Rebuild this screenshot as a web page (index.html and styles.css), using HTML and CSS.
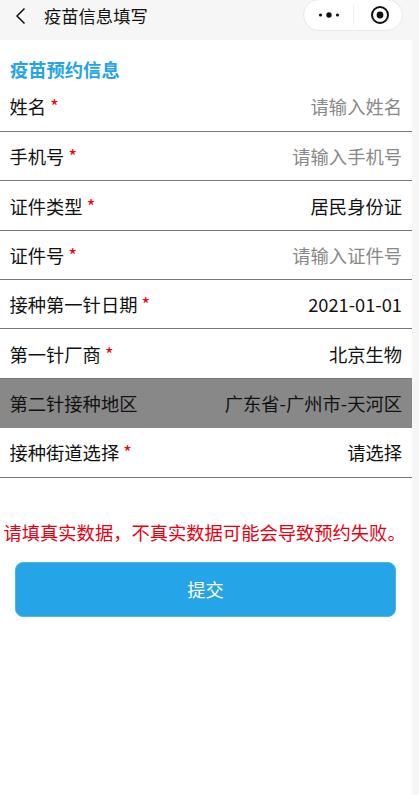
FILE: index.html
```html
<!DOCTYPE html>
<html>
<head>
<meta name="viewport" content="width=device-width, initial-scale=1">
<link rel="stylesheet" href="styles.css">
</head>
<body>
<div class="page">
  <div class="navbar">
    <svg class="back" width="12" height="18" viewBox="0 0 12 18"><path d="M10.500 1.500 L3 9 L10.500 16.500" fill="none" stroke="#111" stroke-width="1.500"/></svg>
    <span class="nav-title">疫苗信息填写</span>
    <div class="capsule">
      <svg class="dots" width="22" height="8" viewBox="0 0 22 8"><circle cx="2.500" cy="4" r="1.600" fill="#111"/><circle cx="11" cy="4" r="2.700" fill="#111"/><circle cx="19.500" cy="4" r="1.600" fill="#111"/></svg>
      <span class="capsule-line"></span>
      <svg class="target" width="20" height="20" viewBox="0 0 20 20"><circle cx="10" cy="10" r="8" fill="none" stroke="#111" stroke-width="2"/><circle cx="10" cy="10" r="3.400" fill="#111"/></svg>
    </div>
  </div>
  <div class="section-title">疫苗预约信息</div>
  <div class="form">
    <div class="row first"><span>姓名 <i>*</i></span><span class="hint">请输入姓名</span></div>
    <div class="row"><span>手机号 <i>*</i></span><span class="hint">请输入手机号</span></div>
    <div class="row"><span>证件类型 <i>*</i></span><span>居民身份证</span></div>
    <div class="row"><span>证件号 <i>*</i></span><span class="hint">请输入证件号</span></div>
    <div class="row"><span>接种第一针日期 <i>*</i></span><span>2021-01-01</span></div>
    <div class="row"><span>第一针厂商 <i>*</i></span><span>北京生物</span></div>
    <div class="row grey"><span>第二针接种地区</span><span>广东省-广州市-天河区</span></div>
    <div class="row"><span>接种街道选择 <i>*</i></span><span>请选择</span></div>
  </div>
  <p class="warn">请填真实数据，不真实数据可能会导致预约失败。</p>
  <button class="submit">提交</button>
</div>
</body>
</html>
```
FILE: styles.css
```css
* {
  box-sizing: border-box;
}
body {
  margin: 0;
  height: 795px;
  overflow: hidden;
  background-color: #f6f6f6;
  font-family: "Noto Sans CJK SC", "Liberation Sans", sans-serif;
  color: #111;
}
.page {
  width: 412px;
  height: 795px;
  background-color: #fff;
}
/* top bar */
.navbar {
  width: 419px;
  height: 40px;
  background-color: #f6f6f6;
  display: flex;
  align-items: flex-start;
  padding: 0 16px 0 14px;
}
.back {
  margin-top: 7px;
}
.nav-title {
  margin-left: 18px;
  font-size: 17.300px;
  line-height: 32px;
  flex: 1;
}
.capsule {
  width: 100px;
  height: 32px;
  margin-top: -1px;
  border: 1px solid #e8e8e8;
  border-radius: 16px;
  background-color: #fff;
  display: flex;
  align-items: center;
  padding-left: 14px;
}
.capsule-line {
  width: 1px;
  height: 20px;
  margin-left: 13px;
  background-color: #eee;
}
.target {
  margin-left: 16px;
}
.section-title {
  padding-left: 10px;
  margin-top: 15px;
  height: 29px;
  font-size: 18.300px;
  line-height: 28px;
  font-weight: bold;
  color: #25a4e8;
}
/* form rows */
.row {
  height: 49.360px;
  display: flex;
  align-items: center;
  justify-content: space-between;
  padding: 0 10px 0 9.500px;
  border-bottom: 1px solid #777;
  font-size: 18.300px;
}
.row.first {
  height: 48px;
  padding-bottom: 3px;
}
.row i {
  font-style: normal;
  color: #e00;
}
.hint {
  color: #888;
}
.row.grey {
  background-color: #888;
  border-bottom: none;
}
.warn {
  margin: 40px 0 0 3.500px;
  font-size: 18.300px;
  line-height: 28px;
  white-space: nowrap;
  color: #e60012;
}
.submit {
  display: block;
  width: 381px;
  height: 55px;
  margin: 16px 0 0 15px;
  border: 1px solid #4fb5ec;
  border-radius: 8px;
  background-color: #25a4e8;
  color: #fff;
  font-family: inherit;
  font-size: 18.300px;
}
```
